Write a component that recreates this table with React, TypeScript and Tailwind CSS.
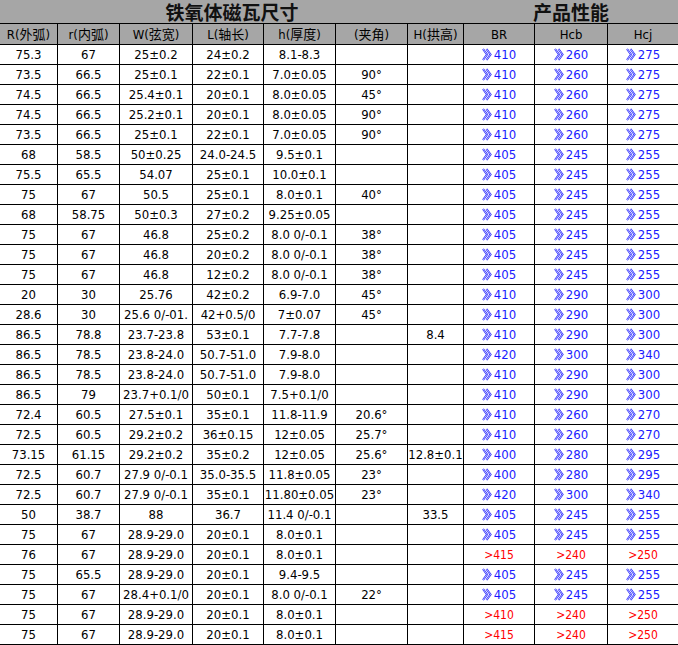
const COLS = "grid-cols-[58px_62px_73px_71px_72px_72px_56px_71px_73px_70px]"

type Row = {
  cells: string[]
  perf: [string, string, string]
  red?: boolean
}

const ROWS: Row[] = [
  { cells: ["75.3", "67", "25±0.2", "24±0.2", "8.1-8.3", "", ""], perf: ["410", "260", "275"] },
  { cells: ["73.5", "66.5", "25±0.1", "22±0.1", "7.0±0.05", "90°", ""], perf: ["410", "260", "275"] },
  { cells: ["74.5", "66.5", "25.4±0.1", "20±0.1", "8.0±0.05", "45°", ""], perf: ["410", "260", "275"] },
  { cells: ["74.5", "66.5", "25.2±0.1", "20±0.1", "8.0±0.05", "90°", ""], perf: ["410", "260", "275"] },
  { cells: ["73.5", "66.5", "25±0.1", "22±0.1", "7.0±0.05", "90°", ""], perf: ["410", "260", "275"] },
  { cells: ["68", "58.5", "50±0.25", "24.0-24.5", "9.5±0.1", "", ""], perf: ["405", "245", "255"] },
  { cells: ["75.5", "65.5", "54.07", "25±0.1", "10.0±0.1", "", ""], perf: ["405", "245", "255"] },
  { cells: ["75", "67", "50.5", "25±0.1", "8.0±0.1", "40°", ""], perf: ["405", "245", "255"] },
  { cells: ["68", "58.75", "50±0.3", "27±0.2", "9.25±0.05", "", ""], perf: ["405", "245", "255"] },
  { cells: ["75", "67", "46.8", "25±0.2", "8.0 0/-0.1", "38°", ""], perf: ["405", "245", "255"] },
  { cells: ["75", "67", "46.8", "20±0.2", "8.0 0/-0.1", "38°", ""], perf: ["405", "245", "255"] },
  { cells: ["75", "67", "46.8", "12±0.2", "8.0 0/-0.1", "38°", ""], perf: ["405", "245", "255"] },
  { cells: ["20", "30", "25.76", "42±0.2", "6.9-7.0", "45°", ""], perf: ["410", "290", "300"] },
  { cells: ["28.6", "30", "25.6 0/-01.", "42+0.5/0", "7±0.07", "45°", ""], perf: ["410", "290", "300"] },
  { cells: ["86.5", "78.8", "23.7-23.8", "53±0.1", "7.7-7.8", "", "8.4"], perf: ["410", "290", "300"] },
  { cells: ["86.5", "78.5", "23.8-24.0", "50.7-51.0", "7.9-8.0", "", ""], perf: ["420", "300", "340"] },
  { cells: ["86.5", "78.5", "23.8-24.0", "50.7-51.0", "7.9-8.0", "", ""], perf: ["410", "290", "300"] },
  { cells: ["86.5", "79", "23.7+0.1/0", "50±0.1", "7.5+0.1/0", "", ""], perf: ["410", "290", "300"] },
  { cells: ["72.4", "60.5", "27.5±0.1", "35±0.1", "11.8-11.9", "20.6°", ""], perf: ["410", "260", "270"] },
  { cells: ["72.5", "60.5", "29.2±0.2", "36±0.15", "12±0.05", "25.7°", ""], perf: ["410", "260", "270"] },
  { cells: ["73.15", "61.15", "29.2±0.2", "35±0.2", "12±0.05", "25.6°", "12.8±0.1"], perf: ["400", "280", "295"] },
  { cells: ["72.5", "60.7", "27.9 0/-0.1", "35.0-35.5", "11.8±0.05", "23°", ""], perf: ["400", "280", "295"] },
  { cells: ["72.5", "60.7", "27.9 0/-0.1", "35±0.1", "11.80±0.05", "23°", ""], perf: ["420", "300", "340"] },
  { cells: ["50", "38.7", "88", "36.7", "11.4 0/-0.1", "", "33.5"], perf: ["405", "245", "255"] },
  { cells: ["75", "67", "28.9-29.0", "20±0.1", "8.0±0.1", "", ""], perf: ["405", "245", "255"] },
  { cells: ["76", "67", "28.9-29.0", "20±0.1", "8.0±0.1", "", ""], perf: ["415", "240", "250"], red: true },
  { cells: ["75", "65.5", "28.9-29.0", "20±0.1", "9.4-9.5", "", ""], perf: ["405", "245", "255"] },
  { cells: ["75", "67", "28.4+0.1/0", "20±0.1", "8.0 0/-0.1", "22°", ""], perf: ["405", "245", "255"] },
  { cells: ["75", "67", "28.9-29.0", "20±0.1", "8.0±0.1", "", ""], perf: ["410", "240", "250"], red: true },
  { cells: ["75", "67", "28.9-29.0", "20±0.1", "8.0±0.1", "", ""], perf: ["415", "240", "250"], red: true },
]

const HEADERS = ["R(外弧)", "r(内弧)", "W(弦宽)", "L(轴长)", "h(厚度)", "(夹角)", "H(拱高)", "BR", "Hcb", "Hcj"]

// hollow double chevron, like the 》 glyph in the sheet
function Chevrons() {
  return (
    <svg width="10" height="13" viewBox="0 0 10 13" className="mr-[2px] shrink-0">
      <polyline points="1,1 5,6.5 1,12" fill="none" stroke="#1a1aff" strokeWidth="2" />
      <polyline points="1,1 5,6.5 1,12" fill="none" stroke="#fff" strokeWidth="0.7" />
      <polyline points="4.5,1 8.5,6.5 4.5,12" fill="none" stroke="#1a1aff" strokeWidth="2" />
      <polyline points="4.5,1 8.5,6.5 4.5,12" fill="none" stroke="#fff" strokeWidth="0.7" />
    </svg>
  )
}

function Cell({ children, last, className = "" }: { children?: React.ReactNode; last?: boolean; className?: string }) {
  return (
    <div
      className={`flex items-center justify-center border-b border-black ${last ? "" : "border-r"} ${className}`}
    >
      {children}
    </div>
  )
}

export default function App() {
  return (
    <div
      className="w-[678px] bg-white text-[13px] leading-none text-black"
      style={{ fontFamily: '"DejaVu Sans Condensed", "Liberation Sans", "Noto Sans CJK SC", sans-serif' }}
    >
      <div
        className="flex h-[24px] border-b border-black bg-[#a6a6a6] text-[19px] font-bold leading-[23px] text-[#111]"
        style={{ fontFamily: '"Noto Sans CJK SC", sans-serif' }}
      >
        <div className="w-[464px] text-center">铁氧体磁瓦尺寸</div>
        <div className="flex-1 text-center">产品性能</div>
      </div>

      <div className={`grid ${COLS} h-[21px] bg-[#a6a6a6]`}>
        {HEADERS.map((h, i) => (
          <Cell key={h} last={i === HEADERS.length - 1}>
            {h}
          </Cell>
        ))}
      </div>

      {ROWS.map((row, r) => (
        <div key={r} className={`grid ${COLS} h-[20px]`}>
          {row.cells.map((c, i) => (
            <Cell key={i}>{c}</Cell>
          ))}
          {row.perf.map((p, i) => (
            <Cell key={"p" + i} last={i === 2}>
              {row.red ? (
                <span className="text-[12px] text-[#ff0000]">&gt;{p}</span>
              ) : (
                <span className="flex items-center text-[#1a1aff]">
                  <Chevrons />
                  {p}
                </span>
              )}
            </Cell>
          ))}
        </div>
      ))}
    </div>
  )
}
